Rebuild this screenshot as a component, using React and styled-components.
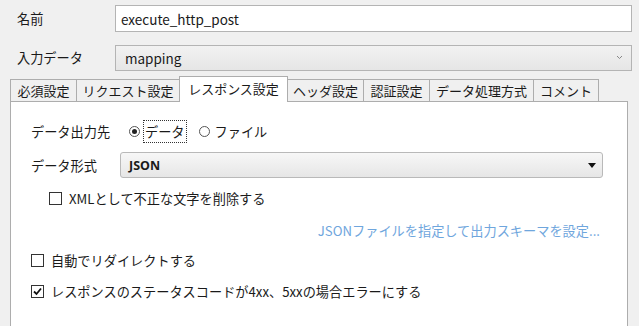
import React, { useState } from 'react'
import styled, { createGlobalStyle } from 'styled-components'

const GlobalStyle = createGlobalStyle`
  html, body {
    margin: 0;
    padding: 0;
    background: #f0f0f0;
    overflow: hidden;
  }
  body {
    font-family: "Noto Sans CJK JP", "Noto Sans", sans-serif;
    font-size: 13.2px;
    color: #1a1a1a;
  }
`;

const Page = styled.div`
  width: 639px;
  height: 326px;
  padding: 5px 7px 0 10px;
  box-sizing: border-box;
  display: flex;
  flex-direction: column;
`;

const FieldRow = styled.div`
  display: grid;
  grid-template-columns: 105px 1fr;
  align-items: center;
  height: 27px;
  margin-bottom: ${(p) => p.$gap || 0}px;
`;

const Label = styled.span`
  padding-left: 7px;
  white-space: nowrap;
`;

const TextInput = styled.div`
  height: 27px;
  box-sizing: border-box;
  border: 1px solid #b4b4b4;
  background: #fff;
  padding: 0 5px;
  display: flex;
  align-items: center;
  font-size: 13.5px;
`;

const ComboBox = styled(TextInput)`
  height: 26px;
  background: linear-gradient(#f2f2f2, #e6e6e6);
  justify-content: space-between;
  padding: 0 8px 0 9px;
`;

const Chevron = styled.svg`
  width: 7px;
  height: 5px;
`;

const TabBar = styled.div`
  display: flex;
  align-items: flex-end;
  height: 26px;
  margin-top: 5px;
  position: relative;
  z-index: 1;
`;

const Tab = styled.div`
  width: ${(p) => p.$w}px;
  height: ${(p) => (p.$active ? 26 : 23)}px;
  box-sizing: border-box;
  border: 1px solid #adadad;
  border-bottom: ${(p) => (p.$active ? 'none' : '1px solid #adadad')};
  margin-left: ${(p) => (p.$first ? 0 : -1)}px;
  background: ${(p) => (p.$active ? '#fff' : '#f0f0f0')};
  display: flex;
  align-items: center;
  justify-content: center;
  white-space: nowrap;
  font-size: 13px;
  padding-bottom: ${(p) => (p.$active ? 2 : 0)}px;
`;

const Panel = styled.div`
  width: 618px;
  flex: 1;
  margin-top: -1px;
  box-sizing: border-box;
  border: 1px solid #adadad;
  border-bottom: none;
  background: #fff;
  padding: 19px 0 0 20px;
  display: flex;
  flex-direction: column;
`;

const Line = styled.div`
  display: flex;
  align-items: center;
  height: ${(p) => p.$h || 20}px;
  margin-bottom: ${(p) => p.$gap || 0}px;
  padding-left: ${(p) => p.$indent || 0}px;
`;

const PanelLabel = styled.span`
  width: 89px;
  white-space: nowrap;
`;

const Radio = styled.span`
  width: 11px;
  height: 11px;
  box-sizing: border-box;
  border-radius: 50%;
  border: 1px solid #555;
  display: inline-flex;
  align-items: center;
  justify-content: center;
  margin-left: ${(p) => p.$lead || 0}px;
  margin-right: 3px;
  &::after {
    content: '';
    width: 5px;
    height: 5px;
    border-radius: 50%;
    background: ${(p) => (p.$on ? '#222' : 'transparent')};
  }
`;

const RadioText = styled.span`
  padding: 1px 1px;
  border: 1px dotted ${(p) => (p.$focus ? '#333' : 'transparent')};
  margin-right: 12px;
`;

const Select = styled.div`
  width: 483px;
  height: 26px;
  box-sizing: border-box;
  border: 1px solid #b9b9b9;
  border-radius: 3px;
  background: linear-gradient(#f7f7f7, #e6e6e6);
  display: flex;
  align-items: center;
  justify-content: space-between;
  padding: 0 6px 0 8px;
  font-weight: bold;
  font-size: 12.5px;
  font-family: "Noto Sans", sans-serif;
`;

const Box = styled.span`
  width: 13px;
  height: 13px;
  box-sizing: border-box;
  border: 1px solid #333;
  background: #fff;
  margin-right: 7px;
  display: inline-flex;
  align-items: center;
  justify-content: center;
`;

const LinkText = styled.a`
  align-self: flex-end;
  margin-right: 27px;
  color: #6fa6dd;
  text-decoration: none;
  height: 20px;
  display: flex;
  align-items: center;
  margin-bottom: 10px;
`;

const tabs = [
  ['必須設定', 67],
  ['リクエスト設定', 104],
  ['レスポンス設定', 109],
  ['ヘッダ設定', 77],
  ['認証設定', 67],
  ['データ処理方式', 105],
  ['コメント', 66],
];

const CheckRow = ({ checked, children, indent, gap }) => (
  <Line $indent={indent} $gap={gap}>
    <Box>
      {checked && (
        <svg width="9" height="9" viewBox="0 0 9 9">
          <path d="M1 4.5 L3.5 7 L8 1.5" stroke="#111" strokeWidth="1.8" fill="none" />
        </svg>
      )}
    </Box>
    {children}
  </Line>
);

export default function App() {
  const [active] = useState(2);
  return (
    <>
      <GlobalStyle />
      <Page>
        <FieldRow $gap={12}>
          <Label>名前</Label>
          <TextInput>execute_http_post</TextInput>
        </FieldRow>
        <FieldRow>
          <Label>入力データ</Label>
          <ComboBox>
            mapping
            <Chevron viewBox="0 0 7 5">
              <path d="M1 1 L3.5 3.5 L6 1" stroke="#888" strokeWidth="1" fill="none" />
            </Chevron>
          </ComboBox>
        </FieldRow>
        <TabBar>
          {tabs.map(([name, w], i) => (
            <Tab key={name} $w={w} $first={i === 0} $active={i === active}>
              {name}
            </Tab>
          ))}
        </TabBar>
        <Panel>
          <Line $gap={11}>
            <PanelLabel>データ出力先</PanelLabel>
            <Radio $on $lead={9} />
            <RadioText $focus>データ</RadioText>
            <Radio />
            <RadioText>ファイル</RadioText>
          </Line>
          <Line $gap={10} $h={26}>
            <PanelLabel>データ形式</PanelLabel>
            <Select>
              JSON
              <svg width="8" height="5" viewBox="0 0 8 5">
                <path d="M0 0 H8 L4 5 Z" fill="#111" />
              </svg>
            </Select>
          </Line>
          <CheckRow indent={18} gap={12}>XMLとして不正な文字を削除する</CheckRow>
          <LinkText>JSONファイルを指定して出力スキーマを設定...</LinkText>
          <CheckRow gap={11}>自動でリダイレクトする</CheckRow>
          <CheckRow checked>レスポンスのステータスコードが4xx、5xxの場合エラーにする</CheckRow>
        </Panel>
      </Page>
    </>
  );
}
